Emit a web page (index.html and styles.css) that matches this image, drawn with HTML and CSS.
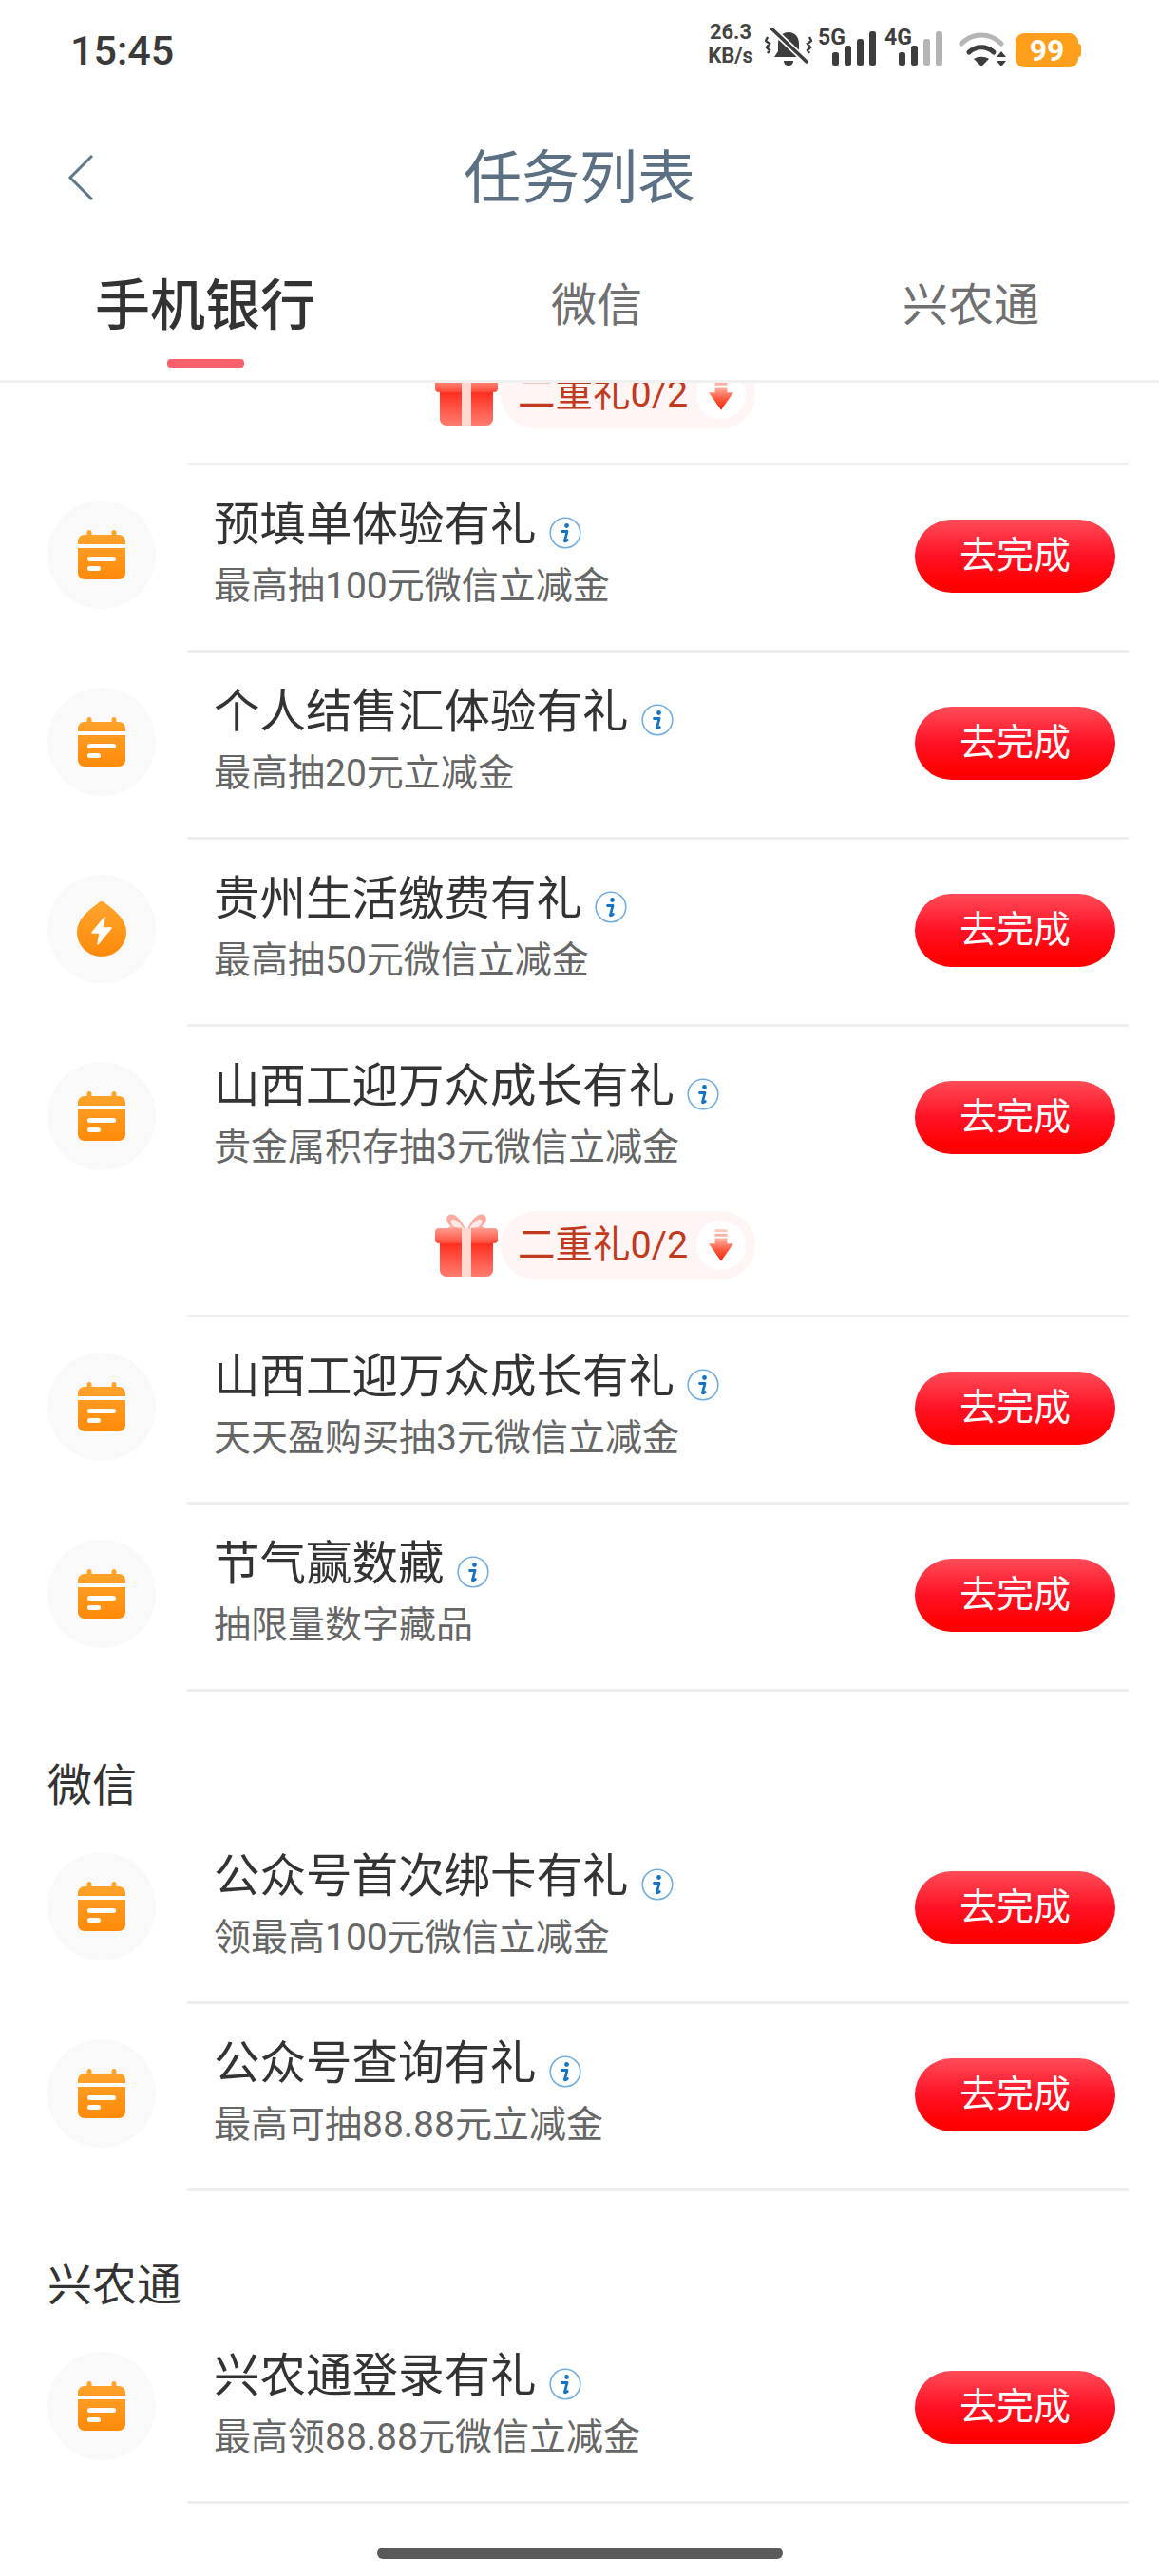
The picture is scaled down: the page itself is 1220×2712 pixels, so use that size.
FILE: index.html
```html
<!DOCTYPE html>
<html lang="zh-CN">
<head>
<meta charset="utf-8">
<title>任务列表</title>
<link rel="stylesheet" href="styles.css">
</head>
<body>
<svg class="defs" aria-hidden="true">
  <defs>
    <linearGradient id="orange" x1="0" y1="0" x2="0" y2="1"><stop offset="0" stop-color="#ffa52e"/><stop offset="1" stop-color="#ff8a0a"/></linearGradient>
    <linearGradient id="giftBody" x1="0" y1="0" x2="0" y2="1"><stop offset="0" stop-color="#ff2a1c"/><stop offset="1" stop-color="#ff7d70"/></linearGradient>
    <linearGradient id="giftLid" x1="0" y1="0" x2="0" y2="1"><stop offset="0" stop-color="#ff9d90"/><stop offset="1" stop-color="#ff4a3a"/></linearGradient>
    <linearGradient id="arrowFill" x1="0" y1="0" x2="0" y2="1"><stop offset="0" stop-color="#ffb5a8"/><stop offset="0.5" stop-color="#ff5a40"/><stop offset="1" stop-color="#e22a10"/></linearGradient>
    <symbol id="calendar" viewBox="0 0 50 52">
      <path d="M12 0c1.5 0 2.5 1 2.5 2.5V5h21V2.500C35.500 1 36.500 0 38 0s2.500 1 2.500 2.500V5H43c4 0 7 3 7 7v33c0 4-3 7-7 7H7c-4 0-7-3-7-7V12c0-4 3-7 7-7h2.500V2.500C9.500 1 10.500 0 12 0z" fill="url(#orange)"/>
      <rect x="0" y="15" width="50" height="4" fill="#fff"/>
      <rect x="10" y="28" width="30" height="5" rx="2.500" fill="#fff"/>
      <rect x="10" y="38" width="14" height="5" rx="2.500" fill="#fff"/>
    </symbol>
    <symbol id="drop" viewBox="0 0 52 58">
      <path d="M26 0c2 0 3 1 4.500 2.500C41 10 52 20 52 32c0 14.500-11.500 26-26 26S0 46.500 0 32C0 20 11 10 21.500 2.500 23 1 24 0 26 0z" fill="url(#orange)"/>
      <path d="M29 17 16 33h8l-2 12 14-17h-9z" fill="#fff" stroke="#fff" stroke-width="1.500" stroke-linejoin="round"/>
    </symbol>
    <symbol id="info" viewBox="0 0 34 34">
      <circle cx="17" cy="17" r="15.800" fill="none" stroke="#74aede" stroke-width="1.600"/>
      <circle cx="18.500" cy="9.500" r="2.400" fill="#1673c4"/>
      <path d="M13.500 15.500h5.500l-2.500 9.500c-.3 1 .6 1.300 2.800-.4" fill="none" stroke="#1673c4" stroke-width="2.800" stroke-linecap="round" stroke-linejoin="round"/>
    </symbol>
    <symbol id="gift" viewBox="0 0 66 68">
      <path d="M32 17C27 6 20 0 15 2c-5 2-3 9 2 12l-6 3h44l-6-3c5-3 7-10 2-12-5-2-12 4-17 15z" fill="#ffaca0"/>
      <path d="M30 16C26 10 21 6 18 7c-3 1-1 6 3 8zM36 16c4-6 9-10 12-9 3 1 1 6-3 8z" fill="#fff" opacity=".75"/>
      <path d="M5 30h56v30c0 4-3 7-7 7H12c-4 0-7-3-7-7z" fill="url(#giftBody)"/>
      <rect x="0" y="16" width="66" height="16" rx="4" fill="url(#giftLid)"/>
      <rect x="28" y="16" width="10" height="51" fill="#ffd8d2"/>
    </symbol>
    <symbol id="arrow" viewBox="0 0 28 36">
      <rect x="7" y="0" width="14" height="3" fill="#ffc9bf"/>
      <rect x="7" y="5" width="14" height="3" fill="#ffb0a2"/>
      <path d="M7 10h14v6h7L14 36 0 16h7z" fill="url(#arrowFill)"/>
    </symbol>
  </defs>
</svg>

<header class="top">
  <div class="status">
    <span class="time">15:45</span>
    <div class="status-icons">
      <div class="speed"><span>26.3</span><span>KB/s</span></div>
      <svg class="bell" width="50" height="42" viewBox="0 0 50 42">
        <path d="M25 5c7 0 11 5 11 12v8l4 6H10l4-6v-8c0-7 4-12 11-12z" fill="#3d3d3d"/>
        <path d="M20 35h10c0 3-2 5-5 5s-5-2-5-5z" fill="#3d3d3d"/>
        <path d="M7 1 44 36" stroke="#fff" stroke-width="7"/>
        <path d="M7 1 44 36" stroke="#3d3d3d" stroke-width="3.500" stroke-linecap="round"/>
        <path d="M3 10l-2 4 4 3-3 4 3 3-2 3M47 10l2 4-4 3 3 4-3 3 2 3" fill="none" stroke="#3d3d3d" stroke-width="2.500"/>
      </svg>
      <svg class="signal" width="62" height="48" viewBox="0 -6 62 48">
        <text class="net" x="0" y="18">5G</text>
        <rect x="15" y="26" width="7" height="14" rx="2.500" fill="#3d3d3d"/>
        <rect x="28" y="19" width="7" height="21" rx="2.500" fill="#3d3d3d"/>
        <rect x="41" y="12" width="7" height="28" rx="2.500" fill="#3d3d3d"/>
        <rect x="54" y="4" width="7" height="36" rx="2.500" fill="#3d3d3d"/>
      </svg>
      <svg class="signal" width="62" height="48" viewBox="0 -6 62 48">
        <text class="net" x="0" y="18">4G</text>
        <rect x="15" y="26" width="7" height="14" rx="2.500" fill="#3d3d3d"/>
        <rect x="28" y="19" width="7" height="21" rx="2.500" fill="#3d3d3d"/>
        <rect x="41" y="12" width="7" height="28" rx="2.500" fill="#b5b5b5"/>
        <rect x="54" y="4" width="7" height="36" rx="2.500" fill="#b5b5b5"/>
      </svg>
      <svg class="wifi" width="50" height="38" viewBox="0 0 50 38">
        <path d="M3 13C15 1 33 1 45 13" fill="none" stroke="#b5b5b5" stroke-width="5" stroke-linecap="round"/>
        <path d="M11 22c8-7 18-7 26 0" fill="none" stroke="#3d3d3d" stroke-width="5" stroke-linecap="round"/>
        <path d="M16 29c5-3 11-3 16 0l-8 8z" fill="#3d3d3d"/>
        <path d="M45 21l5 6H40zM45 37l5-6H40z" fill="#3d3d3d"/>
      </svg>
      <div class="battery"><span>99</span></div>
    </div>
  </div>
  <nav class="navbar">
    <svg class="back" width="30" height="50" viewBox="0 0 30 50"><path d="M27 2 4 25l23 23" fill="none" stroke="#5f7789" stroke-width="3"/></svg>
    <h1 class="page-title">任务列表</h1>
  </nav>
  <div class="tabs">
    <div class="tab tab-active"><span>手机银行</span><i class="tab-mark"></i></div>
    <div class="tab"><span>微信</span></div>
    <div class="tab"><span>兴农通</span></div>
  </div>
</header>

<main class="scroller">
  <div class="chip-row chip-row-first">
    <svg class="gift"><use href="#gift"/></svg>
    <div class="pill"><span>二重礼0/2</span><span class="pill-arrow"><svg width="26" height="34"><use href="#arrow"/></svg></span></div>
  </div>
  <div class="chip-line"></div>

  <div class="row"><div class="badge"><svg width="50" height="52"><use href="#calendar"/></svg></div><div class="row-main"><div class="text"><div class="title">预填单体验有礼<svg class="info"><use href="#info"/></svg></div><div class="sub">最高抽100元微信立减金</div></div><button class="go">去完成</button></div></div>
  <div class="row"><div class="badge"><svg width="50" height="52"><use href="#calendar"/></svg></div><div class="row-main"><div class="text"><div class="title">个人结售汇体验有礼<svg class="info"><use href="#info"/></svg></div><div class="sub">最高抽20元立减金</div></div><button class="go">去完成</button></div></div>
  <div class="row"><div class="badge"><svg width="52" height="58"><use href="#drop"/></svg></div><div class="row-main"><div class="text"><div class="title">贵州生活缴费有礼<svg class="info"><use href="#info"/></svg></div><div class="sub">最高抽50元微信立减金</div></div><button class="go">去完成</button></div></div>
  <div class="row row-plain"><div class="badge"><svg width="50" height="52"><use href="#calendar"/></svg></div><div class="row-main"><div class="text"><div class="title">山西工迎万众成长有礼<svg class="info"><use href="#info"/></svg></div><div class="sub">贵金属积存抽3元微信立减金</div></div><button class="go">去完成</button></div></div>

  <div class="chip-row">
    <svg class="gift"><use href="#gift"/></svg>
    <div class="pill"><span>二重礼0/2</span><span class="pill-arrow"><svg width="26" height="34"><use href="#arrow"/></svg></span></div>
  </div>
  <div class="chip-line"></div>

  <div class="row"><div class="badge"><svg width="50" height="52"><use href="#calendar"/></svg></div><div class="row-main"><div class="text"><div class="title">山西工迎万众成长有礼<svg class="info"><use href="#info"/></svg></div><div class="sub">天天盈购买抽3元微信立减金</div></div><button class="go">去完成</button></div></div>
  <div class="row"><div class="badge"><svg width="50" height="52"><use href="#calendar"/></svg></div><div class="row-main"><div class="text"><div class="title">节气赢数藏<svg class="info"><use href="#info"/></svg></div><div class="sub">抽限量数字藏品</div></div><button class="go">去完成</button></div></div>

  <h2 class="section">微信</h2>
  <div class="row"><div class="badge"><svg width="50" height="52"><use href="#calendar"/></svg></div><div class="row-main"><div class="text"><div class="title">公众号首次绑卡有礼<svg class="info"><use href="#info"/></svg></div><div class="sub">领最高100元微信立减金</div></div><button class="go">去完成</button></div></div>
  <div class="row"><div class="badge"><svg width="50" height="52"><use href="#calendar"/></svg></div><div class="row-main"><div class="text"><div class="title">公众号查询有礼<svg class="info"><use href="#info"/></svg></div><div class="sub">最高可抽88.88元立减金</div></div><button class="go">去完成</button></div></div>

  <h2 class="section">兴农通</h2>
  <div class="row"><div class="badge"><svg width="50" height="52"><use href="#calendar"/></svg></div><div class="row-main"><div class="text"><div class="title">兴农通登录有礼<svg class="info"><use href="#info"/></svg></div><div class="sub">最高领88.88元微信立减金</div></div><button class="go">去完成</button></div></div>
</main>

<div class="home-wrap"><div class="home-bar"></div></div>
</body>
</html>
```

FILE: styles.css
```css
* { box-sizing: border-box; }
html, body {
  margin: 0;
  padding: 0;
  width: 1220px;
  height: 2712px;
  overflow: hidden;
  background: #fff;
}
body {
  display: flex;
  flex-direction: column;
  font-family: Roboto, "Noto Sans CJK SC", "Noto Sans", sans-serif;
  color: #333;
}
.defs { display: block; width: 0; height: 0; }

/* header */
.top {
  position: relative;
  z-index: 2;
  background: #fff;
  height: 403px;
  border-bottom: 3px solid #f0f0f0;
  flex: none;
}
.status {
  height: 100px;
  display: flex;
  align-items: flex-start;
  justify-content: space-between;
  padding: 29px 85px 0 74px;
}
.time { font-size: 43px; font-weight: 500; line-height: 48px; color: #3a3a3a; }
.status-icons { display: flex; align-items: flex-end; height: 42px; }
.speed {
  display: flex;
  flex-direction: column;
  align-items: center;
  font-size: 22px;
  font-weight: 700;
  line-height: 25px;
  color: #444;
  width: 50px;
  margin-right: 11px;
}
.bell { margin-right: 7px; }
.signal { margin-right: 9px; margin-left: -1px; }
.net { font-size: 23px; font-weight: 700; fill: #3d3d3d; font-family: Roboto, sans-serif; }
.wifi { margin: 0 10px 0 7px; }
.battery {
  position: relative;
  width: 66px;
  height: 36px;
  border-radius: 9px;
  background: #ff9f1c;
  color: #fff;
  font-size: 32px;
  font-weight: 700;
  line-height: 36px;
  text-align: center;
}
.battery::after {
  content: "";
  position: absolute;
  right: -3px;
  top: 11px;
  width: 3px;
  height: 14px;
  border-radius: 0 3px 3px 0;
  background: #ff9f1c;
}
.navbar {
  position: relative;
  height: 170px;
  display: flex;
  align-items: center;
  justify-content: center;
  padding-top: 6px;
}
.back { position: absolute; left: 70px; top: 62px; }
.page-title {
  margin: 0;
  font-size: 61px;
  font-weight: 400;
  line-height: 70px;
  color: #5b7082;
}
.tabs {
  display: grid;
  grid-template-columns: 432px 392px 396px;
}
.tab {
  display: flex;
  flex-direction: column;
  align-items: center;
  height: 130px;
  padding-top: 20px;
  font-size: 48px;
  line-height: 64px;
  color: #707070;
}
.tab-active { font-size: 58px; font-weight: 500; color: #333; padding-top: 16px; line-height: 72px; }
.tab-mark {
  display: block;
  width: 81px;
  height: 9px;
  margin-top: 20px;
  border-radius: 4px;
  background: #f8606c;
}

/* list */
.scroller { flex: 1; min-height: 0; overflow: hidden; }
.chip-row {
  height: 72px;
  display: flex;
  align-items: center;
  padding-left: 458px;
  margin: -3px 0 37px;
}
.chip-row-first { margin: -24px 0 36px; }
.chip-line { height: 3px; margin: 0 32px 0 197px; background: #eee; }
.gift { width: 66px; height: 68px; flex: none; position: relative; z-index: 1; }
.pill {
  display: flex;
  align-items: center;
  height: 72px;
  width: 268px;
  margin-left: 3px;
  padding: 0 10px 0 18px;
  border-radius: 36px;
  background: #fff5f4;
  color: #c03a20;
  font-size: 39.500px;
  line-height: 72px;
  justify-content: space-between;
}
.pill-arrow {
  display: flex;
  align-items: center;
  justify-content: center;
  width: 52px;
  height: 52px;
  border-radius: 50%;
  background: #fff;
}
.row {
  display: flex;
  height: 197px;
  padding-left: 50px;
}
.badge {
  width: 114px;
  height: 114px;
  margin-top: 37px;
  flex: none;
  border-radius: 50%;
  background: #f9f9f9;
  display: flex;
  align-items: center;
  justify-content: center;
}
.row-main {
  flex: 1;
  display: flex;
  align-items: center;
  justify-content: space-between;
  margin: 0 32px 0 33px;
  padding: 0 14px 4px 28px;
  border-bottom: 3px solid #eee;
}
.row-plain .row-main { border-bottom-color: transparent; }
.text { padding-bottom: 8px; }
.title {
  display: flex;
  align-items: center;
  font-size: 48.500px;
  line-height: 64px;
  color: #333;
}
.info { width: 34px; height: 34px; margin: 16px 0 0 13px; flex: none; }
.sub {
  font-size: 39px;
  line-height: 50px;
  color: #666;
  margin-top: 7px;
}
.go {
  width: 211px;
  height: 77px;
  border: 0;
  padding: 0;
  border-radius: 39px;
  background: linear-gradient(180deg, #ff4c58 0%, #ff1225 50%, #ff0000 90%);
  color: #fff;
  font-family: inherit;
  font-size: 39px;
  line-height: 77px;
}
.section {
  margin: 0;
  height: 132px;
  padding: 68px 0 0 50px;
  font-size: 47px;
  font-weight: 400;
  line-height: 62px;
  color: #333;
}
.home-wrap {
  position: absolute;
  left: 0;
  right: 0;
  top: 2682px;
  display: flex;
  justify-content: center;
}
.home-bar { width: 427px; height: 12px; border-radius: 6px; background: #5a5a5a; }
```
